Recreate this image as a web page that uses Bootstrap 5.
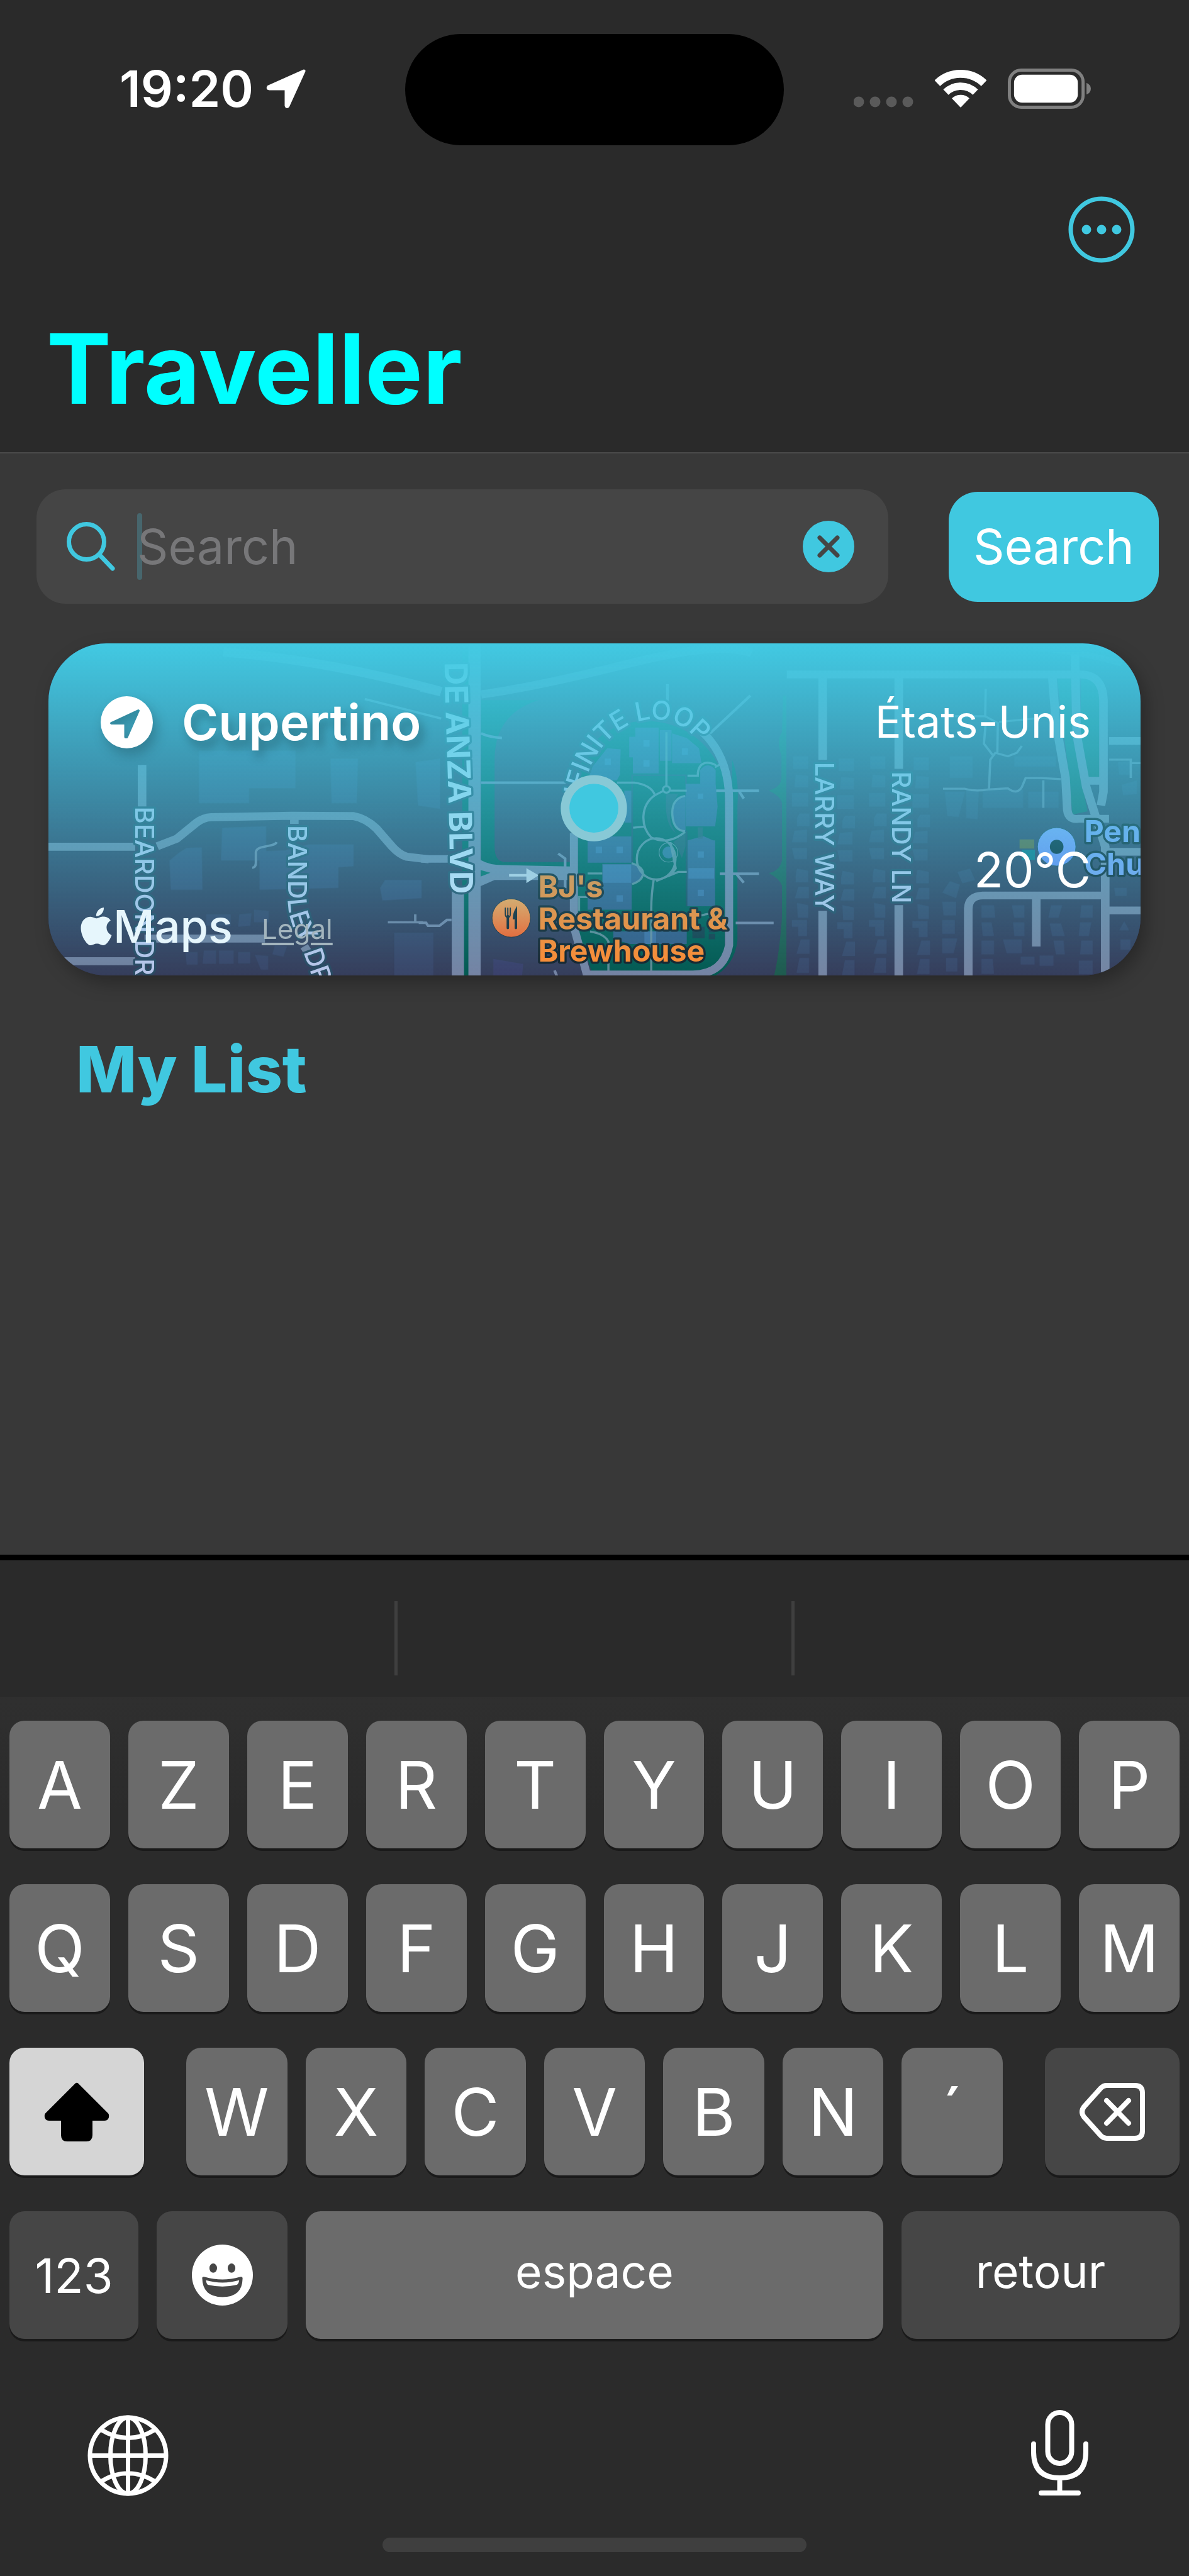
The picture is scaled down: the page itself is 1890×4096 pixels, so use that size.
<!DOCTYPE html>
<html lang="fr" data-bs-theme="dark">
<head>
<meta charset="utf-8">
<meta name="viewport" content="width=device-width, initial-scale=1">
<title>Traveller</title>
<link href="https://cdn.jsdelivr.net/npm/bootstrap@5.3.0/dist/css/bootstrap.min.css" rel="stylesheet">
<style>
  :root { --tint: #40c8e0; --chrome: #2a2a2a; --page: #383838; }
  body { background: var(--page); color: #fff; font-family: Inter, "Liberation Sans", sans-serif; }
  svg { display: block; flex: none; }
  .bare { background: none; border: 0; padding: 0; color: inherit; }

  .app-header { background: var(--chrome); border-bottom: 2px solid #4a4a4a; padding-bottom: 53px; }
  .status { padding-top: 54px; display: grid; grid-template-columns: 1fr auto 1fr; }
  .clock { font-size: 80px; line-height: 80px; font-weight: 600; }
  .island { width: 602px; height: 177px; background: #000; }
  .status-left { padding-left: 190px; gap: 20px; }
  .status-right { padding-right: 156px; gap: 34px; }
  .status-left, .status-right { padding-bottom: 4px; }
  .toolbar-row { margin-top: 81px; padding-right: 86px; color: var(--tint); }
  .app-title { margin: 88px 0 0; padding-left: 74px; font-size: 154px; line-height: 160px; font-weight: 700; color: #0ff; }

  .search-row { padding: 57px 48px 0 58px; gap: 96px; }
  .search-field { height: 182px; border-radius: 46px; background: #454545; padding: 0 54px 0 48px; min-width: 0; }
  .search-field input { background: none; border: 0; outline: 0; padding: 0; margin-left: -8px; min-width: 0; font-size: 77px; line-height: 100px; color: #fff; }
  .search-field input::placeholder { color: #777779; opacity: 1; }
  .caret { width: 8px; height: 106px; border-radius: 4px; background: #47666d; margin-left: 34px; flex: none; }
  .search-btn { flex: none; width: 334px; height: 175px; border: 0; border-radius: 46px; background: var(--tint); color: #fff; font-size: 77px; line-height: 100px; padding: 0; }

  .place { margin: 63px 77px 0; height: 528px; border: 0; border-radius: 92px; overflow: hidden; color: #fff; background: #363e5c; }
  .place-wrap { filter: drop-shadow(8px 12px 14px rgba(0,0,0,.28)); }
  .place-map { inset: 0; width: 100%; height: 100%; }
  .place-top { margin-top: 84px; height: 82px; padding: 0 79px 0 83px; }
  .place-name { font-size: 79px; line-height: 82px; font-weight: 600; margin: 0 0 0 46px; text-shadow: 6px 10px 16px rgba(0,0,0,.28); }
  .place-country { font-size: 70px; line-height: 82px; }
  .place-temp { margin-top: 156px; padding-right: 79px; font-size: 77px; line-height: 76px; text-align: right; }
  .place-credit { margin-top: 11px; padding-left: 51px; line-height: 74px; color: #e6f6fc; }
  .maps-word { font-size: 72px; font-weight: 500; margin-left: 2px; }
  .legal { font-size: 44px; color: #a3b5be; margin-left: 46px; padding-top: 8px; text-underline-offset: 6px; }
  .legal:hover { color: #fff; }
  .lbl { fill: #b9c6ea; stroke: #2a4a62; stroke-width: 7; paint-order: stroke; stroke-linejoin: round; font-weight: 500; font-size: 42px; }
  .lbl-major { font-size: 51px; font-weight: 700; fill: #d3e2fa; }
  .poi { stroke: #14222c; stroke-width: 7; paint-order: stroke; stroke-linejoin: round; font-weight: 700; font-size: 49px; }

  .list-title { margin: 99px 0 0; padding-left: 121px; font-size: 102px; line-height: 100px; font-weight: 800; color: var(--tint); }

  .keyboard { border-top: 9px solid #000; background: #2b2b2b; padding-bottom: 38px; }
  .suggest { padding: 65px 0 34px; background: var(--chrome); }
  .suggest > div { flex: 1 1 0; height: 118px; }
  .suggest > div:not(:last-child) { border-right: 5px solid #3f3f3f; }
  .keys { padding: 38px 15px 0; gap: 57px; background: linear-gradient(#2f2f2f, #2b2b2b 180px); }
  .krow { gap: 29px; }
  .key { height: 203px; border: 0; border-radius: 24px; padding: 0; background: #6b6b6b; color: #fff; box-shadow: 0 4px 0 #1a1a1a; font-size: 104px; line-height: 120px; flex: 1 1 0; min-width: 0; display: flex; align-items: center; justify-content: center; }
  .key-dark { background: #464646; }
  .key-on { background: #d5d5d5; }
  .side { flex: 0 0 214px; }
  .midkeys { padding: 0 38px; }
  .k-word { font-size: 73px; padding-bottom: 12px; }
  .k-num { font-size: 76px; flex: 0 0 205px; }
  .k-emoji { flex: 0 0 208px; }
  .k-return { flex: 0 0 442px; }
  .dock { margin-top: 113px; height: 137px; padding: 0 160px 0 139px; }
  .home-bar { width: 674px; height: 23px; background: #3f3f3f; margin: 66px auto 0; }
</style>
<script src="https://cdn.jsdelivr.net/npm/bootstrap@5.3.0/dist/js/bootstrap.bundle.min.js"></script>
</head>
<body class="min-vh-100 d-flex flex-column">

<header class="app-header">
  <div class="status align-items-center">
    <div class="status-left d-flex align-items-center">
      <span class="clock">19:20</span>
      <svg width="64" height="64" viewBox="0 0 64 64" aria-hidden="true"><path d="M60 4 L4 29 Q2 32 5 32 H32 V59 Q33 62 35 59 Z" fill="#fff" stroke="#fff" stroke-width="5" stroke-linejoin="round"/></svg>
    </div>
    <div class="island rounded-pill"></div>
    <div class="status-right d-flex align-items-center justify-content-end">
      <svg width="95" height="64" viewBox="0 0 95 64" fill="#5a5a5a" aria-hidden="true"><circle cx="8" cy="53" r="8.5"/><circle cx="34" cy="53" r="8.5"/><circle cx="60" cy="53" r="8.5"/><circle cx="86" cy="53" r="8.5"/></svg>
      <svg width="82" height="60" viewBox="0 0 83 61" aria-hidden="true"><defs><clipPath id="wedge"><path d="M41.5 61 L-20 -3 H103 Z"/></clipPath></defs><g clip-path="url(#wedge)" fill="none" stroke="#fff"><circle cx="41.5" cy="61" r="54.5" stroke-width="13"/><circle cx="41.5" cy="61" r="34.5" stroke-width="12"/><circle cx="41.5" cy="61" r="10" stroke-width="21"/></g></svg>
      <svg width="132" height="64" viewBox="0 0 134 65" aria-hidden="true"><rect x="2.5" y="2.5" width="119" height="60" rx="19" fill="none" stroke="#808080" stroke-width="5"/><rect x="10" y="10" width="103" height="45" rx="13" fill="#fff"/><path d="M127 23 Q134 26 134 32.500 Q134 39 127 42 Z" fill="#808080"/></svg>
    </div>
  </div>
  <div class="toolbar-row d-flex justify-content-end">
    <button class="bare" type="button" aria-label="Options"><svg width="106" height="106" viewBox="0 0 106 106"><circle cx="53" cy="53" r="49" fill="none" stroke="currentColor" stroke-width="7"/><g fill="currentColor"><circle cx="29" cy="53" r="7.500"/><circle cx="53" cy="53" r="7.500"/><circle cx="77" cy="53" r="7.500"/></g></svg></button>
  </div>
  <h1 class="app-title">Traveller</h1>
</header>

<main class="flex-grow-1">
  <form class="search-row d-flex align-items-center" role="search" onsubmit="return false">
    <div class="search-field d-flex align-items-center flex-grow-1">
      <label for="q"><svg width="78" height="80" viewBox="0 0 78 80" aria-label="Search place"><g fill="none" stroke="#40c8e0" stroke-width="7" stroke-linecap="round"><circle cx="31.500" cy="32.500" r="28"/><path d="M52 53 L73 75"/></g></svg></label>
      <span class="caret"></span>
      <input id="q" class="flex-grow-1" type="text" placeholder="Search">
      <button class="bare" type="reset" aria-label="Clear"><svg width="82" height="82" viewBox="0 0 82 82"><circle cx="41" cy="41" r="41" fill="#40c8e0"/><path d="M27 27 L55 55 M55 27 L27 55" stroke="#454545" stroke-width="7" stroke-linecap="round"/></svg></button>
    </div>
    <button class="search-btn" type="submit">Search</button>
  </form>

  <div class="place-wrap">
  <article class="place card">
    <svg class="place-map position-absolute" viewBox="78 1039 1764 537" preserveAspectRatio="xMidYMid slice" aria-hidden="true">
      <defs>
        <linearGradient id="fade" x1="0" y1="0" x2="0" y2="1"><stop offset="0" stop-color="#42cae3"/><stop offset="1" stop-color="#42cae3" stop-opacity="0"/></linearGradient>
        <linearGradient id="food" x1="0" y1="0" x2="0" y2="1"><stop offset="0" stop-color="#ffa34f"/><stop offset="1" stop-color="#f8622a"/></linearGradient>
        <linearGradient id="church" x1="0" y1="0" x2="0" y2="1"><stop offset="0" stop-color="#88a2fc"/><stop offset="1" stop-color="#6f88f4"/></linearGradient>
        <path id="anza" d="M718 1070 C718 1150 727 1300 727 1480"/>
        <path id="loop" d="M938 1316 C938 1230 990 1163 1055 1162 C1090 1162 1112 1176 1140 1210"/>
        <path id="bandley" d="M465 1333 V1460 Q467 1490 482 1515 L515 1610"/>
        <path id="houses" d="M5 545h60v55h-60zM15 625l50 5v50h-55zM0 705h65v60h-65zM30 795h40v55h-50v-35zM10 870l50-5v55h-60zM0 945h60v50h-50zM20 1035l45 10v50h-50v-30zM25 1115h42v50h-55zM20 1185l45 10v55h-42zM0 1260h60v70h-35v-40h-25zM35 1345h35v62h-52zM30 1425h38v66h-50z"/>
      </defs>
      <rect x="78" y="1039" width="1764" height="537" fill="#363e5c"/>

      <!-- west side -->
      <g transform="translate(60 1020) scale(.3954 .37)">
        <g fill="#435b88" opacity=".45">
          <path d="M660 520h395v165h-190v65h-205zM1197 555h113l-5 195h-103zM1545 570l100-15v220l-90-15z"/>
          <path d="M755 857l180-7v150h-185zM908 960l105-5 95-25h184v95l-62 5v90l-322 8zM540 1000l40-35 30-20 62-2 3 185h-130zM1400 1120l20-35h150v80l-160 10z"/>
          <path d="M690 1235h100v50h-100zM825 1235l50-5-5 55-50 5zM885 1215l60 5v50h-60zM1458 1315h160v190h-160zM605 1400h50v55h-45zM680 1393h50v58h-55zM742 1393h60v58h-60zM820 1400h50v50h-50zM888 1412l55 5v60h-30zM970 1370l50 5-15 45-45-10z" opacity=".7"/>
        </g>
        <g fill="none" stroke="#72819f" stroke-width="35">
          <path d="M40 940H400M490 938L570 905 650 835Q680 812 710 811L1040 805 1290 806Q1340 815 1385 860L1450 940Q1480 975 1510 984L1600 995"/>
          <path d="M428 583V765M438 1341H930M80 1440H400M1050 820V840M1090 1375L1115 1415"/>
          <path d="M760 90Q1180 125 1650 262" stroke-width="40"/>
          <path d="M978 920C965 945 895 930 893 965V1010Q893 1030 878 1032M1432 1270H1575M1544 1235V1270M1338 295L1650 380" stroke-width="10"/>
        </g>
      </g>

      <!-- Infinite Loop -->
      <g transform="translate(680 1020) scale(.3954 .37)">
        <path fill="#045a52" d="M168 50h30v1460h-30zM245 300H480Q300 360 300 560V940Q300 1005 340 1007H620V1040H300L245 1000zM640 1300V620Q700 400 920 390Q1150 400 1240 640V1400Q1200 1490 1110 1497H700zM1270 560Q1300 640 1292 760V1350Q1280 1460 1190 1510H1150L1270 1380z"/>
        <path fill="#1b604c" opacity=".85" d="M1478 280L1474 440Q1450 480 1472 540V640Q1470 680 1420 695Q1470 720 1474 750V1000Q1465 1045 1420 1055Q1465 1080 1474 1110V1250Q1462 1420 1440 1510H1492V280z"/>
        <g fill="#3e5c8e" opacity=".85">
          <path d="M875 420h95v200h-105v-70h-15v-90h25zM975 430h48v135h-48zM1025 445l60 20 50 45 10 65h-120zM760 510l55 5-3 110-12 25h-120l20-60z"/>
          <path d="M1080 665h60v-60q30-40 63 0v60l8 100-10 86h-120zM1088 912l65-18 40 18h8v288h-115zM680 895h180v115h-180zM740 1015h120q45 10 45 42t-45 43v115h-180v-60h60zM785 1310h300v55h-230l-70-20zM830 695h30v140h-30zM1080 715q-55 0-55 80t55 80z"/>
        </g>
        <g fill="#4778ac" opacity=".7"><path d="M908 475h25v28h-25zM908 562h25v28h-25zM750 555h25v28h-25zM1065 510h25v28h-25zM1130 708h22v22h-22zM713 940h26v28h-26zM798 940h26v28h-26zM1130 960h25v28h-25zM1130 1128h25v28h-25zM798 1152h26v28h-26zM1092 1033h105v46h-105zM912 1310h48v55h-48zM742 1018h116v80h-116z"/><ellipse cx="1010" cy="965" rx="24" ry="26"/></g>
        <path fill="#2f5468" opacity=".7" d="M1010 710h40q-60 100-10 170-50-40-38-170zM1030 920l50-40v60l-15 50-20-50zM1130 855h20v50h-20z"/>
        <path d="M862 1010V628H1082V665M1084 870V1200" fill="none" stroke="#1d4a5c" stroke-width="7"/>
        <path d="M1108 1290h50v50h-50zM1175 1290h26v24h-26zM1175 1320h26v24h-26z" fill="#173f4c"/>
        <g fill="none" stroke="#6f92a0" stroke-width="9" opacity=".85">
          <path d="M800 660H870Q940 670 955 715L988 697M1002 440V676M1018 695H1085M955 715C895 760 895 850 940 900M866 857L910 852M940 900Q1010 935 1078 875M1078 718Q1022 730 1026 800T1078 872M950 1083Q940 1150 940 1210V1495M960 1090L1050 1050H1085M1018 920L1040 1035 1020 1062M680 1057H740M765 1350V1495M690 1310Q750 1320 765 1355M1088 630H1130Q1130 575 1170 573 1205 578 1205 590L1222 580M1145 1240Q1180 1230 1200 1230M645 1220V1160H680"/>
          <circle cx="1002" cy="690" r="14"/><ellipse cx="960" cy="993" rx="79" ry="90"/><ellipse cx="1010" cy="965" rx="38" ry="42" stroke-width="3"/><path d="M860 1012Q910 1030 906 1060T862 1103"/>
        </g>
        <g fill="none" stroke="#7584a4">
          <path d="M218 40V1510M150 1120V1510" stroke-width="50"/>
          <path d="M0 993H110M624 880V1290L680 1510M1150 440Q1258 550 1258 740V1370Q1235 1497 1110 1497H670" stroke-width="33"/>
          <path d="M0 245L80 265M245 275Q480 240 850 140T1350 95" stroke-width="36" opacity=".8"/>
          <path d="M245 660H590M1006 230V310M1180 445L1345 280M1205 695H1380M1300 700L1318 730M1220 1058H1380M1290 1062L1318 1097M1285 1273H1440M-10 1272H20L28 1285H75L105 1260H124M245 445Q280 462 330 465M560 970L588 992V1120M545 1480l15 40" stroke-width="11"/>
        </g>
        <path fill="#7584a4" d="M243 998Q280 1020 330 1020L610 1026V1085H300L243 1112z"/>
        <path fill="#0a695f" d="M243 1042l40 12-40 16z"/>
        <path fill="#3f4476" d="M295 1430l122 22-5 55H295z" opacity=".6"/>
      </g>

      <!-- east side -->
      <g transform="translate(1240 1020) scale(.4082 .37)">
        <g fill="#45608c" opacity=".32">
          <use href="#houses" x="95"/><use href="#houses" x="275" y="10"/><use href="#houses" x="400"/><use href="#houses" x="572" y="5"/>
          <path d="M700 700h80l-25 110-45-5zM785 690h50l-5 130-45-5zM720 545h90v95h-90zM850 690h160v80h-160zM975 545h165v45h-165zM1030 700h120v70h-120zM750 1050l50-15 20 50-50 15zM690 1140l30-50 40 15-15 60zM1385 570l50-5v60h-45zM1400 670l60-20v60l-55 5z"/>
          <path d="M845 1195h50l5 55h-55zM965 1195h50v55h-40zM1120 1195h45l-15 55h-40zM1240 1195h45v55h-50zM845 1270h40l10 60h-45zM970 1270h45v60h-40zM1115 1275h45l15 55h-50zM1235 1270h45l-10 60h-40zM845 1350h50v60h-50zM930 1345h75v60h-60zM1130 1350h40l5 60h-35zM1240 1350h45v60h-50zM845 1430h45l5 65h-50zM1000 1420h55v35h-55zM1075 1415h55v45h-55zM1230 1437h55v60h-55zM690 1340h60l-15 65h-45zM705 1425h45v60h-45zM690 1180h55v60h-50zM690 1260h50v60h-50zM1370 1120h50v35h-45zM1390 1305l20-40 20 40zM1395 1345h40v45h-40z"/>
        </g>
        <path fill="#126a5c" opacity=".8" d="M1145 205h55l5 250 60 330-60 15-12-160zM1240 200h50l25 50v390h-50l-28-190z"/>
        <g fill="none" stroke="#7584a2" stroke-width="34">
          <path d="M75 188H1240Q1325 190 1328 300V700L1318 760M217 205V560M217 1220V1510M518 205V600M518 1195V1510"/>
          <path d="M1125 190L1140 400 1178 640 1185 780Q1190 825 1230 818H1350M1215 100L1222 450 1260 680 1335 940V1510"/>
          <path d="M1350 478H1480M1260 652H1320M1340 962H1480M1350 1218H1480M793 1510V1210Q795 1155 850 1153H1330M1062 1165V1376"/>
          <path d="M1050 70Q1250 90 1400 140" stroke-width="26" opacity=".5"/>
          <path d="M693 687H780Q820 700 870 690L950 685Q985 715 1005 680L1020 640H1080L1160 645M1090 650V770M875 690L880 560 900 530 950 545 985 530 1005 500M862 250L860 370 910 400 908 530M862 400L855 490 890 540M740 370H860M915 395L1060 380M1350 560H1436V640M1436 575H1480" stroke-width="9" opacity=".8"/>
        </g>
        <path fill="#6f6d30" opacity=".8" d="M996 908h58v40h-58z"/><path fill="#12717e" d="M1005 953h52v45h-52z"/>
      </g>

      <g class="lbl">
        <text transform="translate(218 1303) rotate(90)">BEARDON DR</text>
        <text><textPath href="#bandley">BANDLEY DR</textPath></text>
        <text><textPath href="#loop">INFINITE LOOP</textPath></text>
        <text transform="translate(1317 1231) rotate(90)">LARRY WAY</text>
        <text transform="translate(1441 1246) rotate(90)">RANDY LN</text>
        <text class="lbl-major"><textPath href="#anza">DE ANZA BLVD</textPath></text>
      </g>
      <path d="M822 1414h36M852 1406l14 8-14 9z" stroke="#c6d2e4" stroke-width="4" fill="#c6d2e4"/>
      <g class="poi" fill="#ff8a30">
        <text x="869" y="1450">BJ's</text><text x="869" y="1502">Restaurant &amp;</text><text x="869" y="1553">Brewhouse</text>
      </g>
      <circle cx="825.500" cy="1483" r="31" fill="url(#food)" stroke="#1d2c38"/>
      <g fill="none" stroke="#172430" stroke-linecap="round"><path d="M820 1480V1499M833 1485V1499" stroke-width="4"/><path d="M816 1467V1476Q816 1482 820 1482T824 1476V1467M820 1467V1480" stroke-width="2"/><path d="M834 1467Q829 1475 829 1484H834z" fill="#172430" stroke-width="2"/></g>
      <circle cx="1706.500" cy="1368" r="31" fill="url(#church)" stroke="#1f4458"/>
      <ellipse cx="1706.500" cy="1368" rx="11" ry="11.500" fill="#0a2430"/>
      <g class="poi" fill="#80a0f4"><text x="1751" y="1360">Pen</text><text x="1751" y="1413">Chu</text></g>

      <rect x="78" y="1039" width="1764" height="537" fill="url(#fade)"/>
      <circle cx="959" cy="1305.500" r="46.500" fill="#40c8e0" stroke="#88c9d6" stroke-width="14"/>
    </svg>

    <div class="position-relative">
      <div class="place-top d-flex align-items-center">
        <svg width="83" height="83" viewBox="0 0 83 83" style="filter:drop-shadow(6px 10px 10px rgba(0,0,0,.22))" aria-hidden="true"><mask id="cut"><rect width="83" height="83" fill="#fff"/><path d="M60 23 L17 43 H39.500 V65 H41.500 Z" fill="#000" stroke="#000" stroke-width="4" stroke-linejoin="round"/></mask><circle cx="41.500" cy="41.500" r="41.500" fill="#fff" mask="url(#cut)"/></svg>
        <h2 class="place-name">Cupertino</h2>
        <span class="place-country ms-auto">États-Unis</span>
      </div>
      <div class="place-temp">20°C</div>
      <div class="place-credit d-flex align-items-center">
        <svg width="50" height="60" viewBox="2 0 20 24" fill="currentColor" aria-hidden="true"><path d="M12.152 6.896c-.948 0-2.415-1.078-3.960-1.040-2.040.027-3.910 1.183-4.961 3.014-2.117 3.675-.546 9.103 1.519 12.090 1.013 1.454 2.208 3.090 3.792 3.039 1.520-.065 2.090-.987 3.935-.987 1.831 0 2.350.987 3.960.948 1.637-.026 2.676-1.480 3.676-2.948 1.156-1.688 1.636-3.325 1.662-3.415-.039-.013-3.182-1.221-3.220-4.857-.026-3.040 2.480-4.494 2.597-4.559-1.429-2.090-3.623-2.324-4.390-2.376-2-.156-3.675 1.090-4.610 1.090zM15.530 3.830c.843-1.012 1.400-2.427 1.245-3.830-1.207.052-2.662.805-3.532 1.818-.780.896-1.454 2.338-1.273 3.714 1.338.104 2.715-.688 3.559-1.701"/></svg>
        <span class="maps-word">Maps</span>
        <a class="legal" href="#">Legal</a>
      </div>
    </div>
  </article>
  </div>

  <h2 class="list-title">My List</h2>
</main>

<section class="keyboard" aria-label="Clavier">
  <div class="suggest d-flex"><div></div><div></div><div></div></div>
  <div class="keys d-flex flex-column">
    <div class="krow d-flex">
      <button class="key" type="button">A</button><button class="key" type="button">Z</button><button class="key" type="button">E</button><button class="key" type="button">R</button><button class="key" type="button">T</button><button class="key" type="button">Y</button><button class="key" type="button">U</button><button class="key" type="button">I</button><button class="key" type="button">O</button><button class="key" type="button">P</button>
    </div>
    <div class="krow d-flex">
      <button class="key" type="button">Q</button><button class="key" type="button">S</button><button class="key" type="button">D</button><button class="key" type="button">F</button><button class="key" type="button">G</button><button class="key" type="button">H</button><button class="key" type="button">J</button><button class="key" type="button">K</button><button class="key" type="button">L</button><button class="key" type="button">M</button>
    </div>
    <div class="krow d-flex">
      <button class="key key-on side" type="button" aria-label="Majuscule"><svg width="104" height="94" viewBox="0 0 104 94"><path d="M52 5 L99 52 Q100 57 96 57 H73 V84 Q73 90 67 90 H37 Q31 90 31 84 V57 H8 Q4 57 5 52 Z" fill="#000" stroke="#000" stroke-width="8" stroke-linejoin="round"/></svg></button>
      <div class="krow midkeys d-flex flex-grow-1">
        <button class="key" type="button">W</button><button class="key" type="button">X</button><button class="key" type="button">C</button><button class="key" type="button">V</button><button class="key" type="button">B</button><button class="key" type="button">N</button><button class="key" type="button">´</button>
      </div>
      <button class="key key-dark side" type="button" aria-label="Effacer"><svg width="104" height="92" viewBox="0 0 104 92"><g fill="none" stroke="#fff" stroke-width="8" stroke-linecap="round" stroke-linejoin="round"><path d="M43 4 H88 Q100 4 100 16 V76 Q100 88 88 88 H43 Q38 88 34 84 L7 54 Q1 46 7 38 L34 8 Q38 4 43 4 Z"/><path d="M43 28 L78 64 M78 28 L43 64"/></g></svg></button>
    </div>
    <div class="krow d-flex">
      <button class="key key-dark k-num" type="button">123</button>
      <button class="key key-dark k-emoji" type="button" aria-label="Emoji"><svg width="97" height="97" viewBox="502 635 160 171" preserveAspectRatio="none"><ellipse cx="582" cy="720.500" rx="80" ry="85.500" fill="#fff"/><g fill="#464646"><ellipse cx="558" cy="701" rx="10" ry="13"/><ellipse cx="606" cy="701" rx="10" ry="13"/><path d="M529 728Q530 724 536 726Q582 740 628 726Q635 724 635 730Q634 782 582 782Q530 782 529 728z"/></g><path d="M539 735Q582 748 626 735Q625 745 620 748Q582 757 544 748Q540 745 539 735z" fill="#fff"/></svg></button>
      <button class="key k-word" type="button">espace</button>
      <button class="key key-dark k-word k-return" type="button">retour</button>
    </div>
  </div>
  <div class="dock d-flex justify-content-between align-items-end">
    <button class="bare" type="button" aria-label="Langue"><svg width="129" height="129" viewBox="0 0 129 129"><g fill="none" stroke="#fff" stroke-width="7"><circle cx="64.500" cy="64.500" r="60.500"/><ellipse cx="64.500" cy="64.500" rx="28" ry="60.500"/><path d="M64.500 4V125M4 64.500H125M21 23Q64.500 50 108 23M21 106Q64.500 79 108 106"/></g></svg></button>
    <button class="bare" type="button" aria-label="Dictée"><svg width="91" height="137" viewBox="0 0 91 137"><g fill="none" stroke="#fff" stroke-width="8" stroke-linecap="round"><rect x="26.500" y="4" width="38" height="81" rx="19"/><path d="M4 54V67Q4 108 45.500 108T87 67V54M45.500 108V132M16 132H75"/></g></svg></button>
  </div>
  <div class="home-bar rounded-pill"></div>
</section>
</body>
</html>
